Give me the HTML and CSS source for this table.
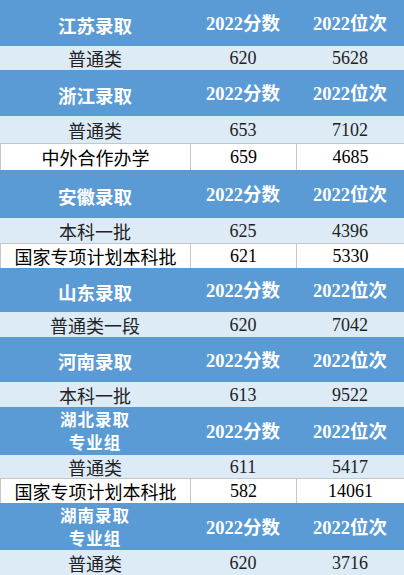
FILE: index.html
```html
<!DOCTYPE html>
<html lang="zh">
<head>
<meta charset="utf-8">
<link rel="stylesheet" href="styles.css">
</head>
<body>
<div class="sheet">
  <div class="row head r46"><div class="c name">江苏录取</div><div class="c num">2022分数</div><div class="c num">2022位次</div></div>
  <div class="row light r24"><div class="c name">普通类</div><div class="c num">620</div><div class="c num">5628</div></div>

  <div class="row head r46"><div class="c name">浙江录取</div><div class="c num">2022分数</div><div class="c num">2022位次</div></div>
  <div class="row light r27"><div class="c name">普通类</div><div class="c num">653</div><div class="c num">7102</div></div>
  <div class="row plain r27"><div class="c name">中外合作办学</div><div class="c num">659</div><div class="c num">4685</div></div>

  <div class="row head r48"><div class="c name">安徽录取</div><div class="c num">2022分数</div><div class="c num">2022位次</div></div>
  <div class="row light r25"><div class="c name">本科一批</div><div class="c num">625</div><div class="c num">4396</div></div>
  <div class="row plain r25"><div class="c name">国家专项计划本科批</div><div class="c num">621</div><div class="c num">5330</div></div>

  <div class="row head r44"><div class="c name">山东录取</div><div class="c num">2022分数</div><div class="c num">2022位次</div></div>
  <div class="row light r25"><div class="c name">普通类一段</div><div class="c num">620</div><div class="c num">7042</div></div>

  <div class="row head r45"><div class="c name">河南录取</div><div class="c num">2022分数</div><div class="c num">2022位次</div></div>
  <div class="row light r25"><div class="c name">本科一批</div><div class="c num">613</div><div class="c num">9522</div></div>

  <div class="row head r48"><div class="c name two"><span class="ln">湖北录取</span><span class="ln">专业组</span></div><div class="c num">2022分数</div><div class="c num">2022位次</div></div>
  <div class="row light r23"><div class="c name">普通类</div><div class="c num">611</div><div class="c num">5417</div></div>
  <div class="row plain r25"><div class="c name">国家专项计划本科批</div><div class="c num">582</div><div class="c num">14061</div></div>

  <div class="row head r47"><div class="c name two"><span class="ln">湖南录取</span><span class="ln">专业组</span></div><div class="c num">2022分数</div><div class="c num">2022位次</div></div>
  <div class="row light r25"><div class="c name">普通类</div><div class="c num">620</div><div class="c num">3716</div></div>
</div>
</body>
</html>
```

FILE: styles.css
```css
html, body {
  margin: 0;
  padding: 0;
  background: #ffffff;
}
.sheet {
  width: 404px;
  display: flex;
  flex-direction: column;
}
.row {
  display: grid;
  grid-template-columns: 190px 106px 108px;
  box-sizing: border-box;
}
.c {
  display: flex;
  align-items: center;
  justify-content: center;
  text-align: center;
  white-space: nowrap;
  font-size: 18px;
  line-height: 22px;
  box-sizing: border-box;
}
.name {
  font-family: "Noto Sans CJK SC", sans-serif;
}
.num {
  font-family: "Liberation Serif", "Noto Sans CJK SC", serif;
}
.head {
  background: #5b9bd5;
  color: #ffffff;
}
.head .c {
  font-weight: 700;
  font-size: 18.5px;
}
.head .name {
  padding-top: 3px;
}
.head .num {
  padding-top: 2px;
}
.head .two {
  flex-direction: column;
  padding-top: 0;
  font-size: 16.5px;
  letter-spacing: 1px;
}
.ln {
  display: block;
  line-height: 23px;
}
.light {
  background: #ddebf7;
  color: #222222;
}
.light .c {
  font-weight: 400;
}
.plain {
  background: #ffffff;
  color: #000000;
  border-top: 1px solid #c6c6c6;
}
.plain .name {
  font-weight: 400;
  border-left: 1px solid #c6c6c6;
}
.plain .c + .c {
  border-left: 1px solid #c6c6c6;
}
.r23 { height: 23px; }
.r24 { height: 24px; }
.r25 { height: 25px; }
.r27 { height: 27px; }
.r44 { height: 44px; }
.r45 { height: 45px; }
.r46 { height: 46px; }
.r47 { height: 47px; }
.r48 { height: 48px; }
```
